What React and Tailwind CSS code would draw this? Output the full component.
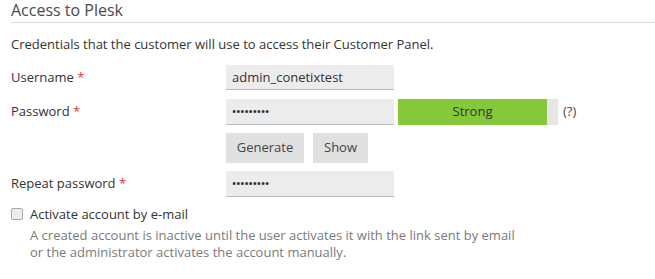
export default function App() {
  const font = { fontFamily: '"Open Sans", "Liberation Sans", sans-serif' };
  return (
    <div className="w-[655px] h-[279px] bg-white text-[13px] text-[#333]" style={font}>
      <div className="pl-[11px]">
        <div className="h-[23px] border-b border-[#dddddd] text-[16px] leading-[20px] text-[#4a4a4a]">
          Access to Plesk
        </div>
        <div className="mt-[12px] leading-[18px] text-[#333]">
          Credentials that the customer will use to access their Customer Panel.
        </div>
        <div className="mt-[12px] flex items-center h-[25px]">
          <div className="w-[215px]">
            Username <span className="text-[#e0342c]">*</span>
          </div>
          <div className="w-[168px] h-[25px] bg-[#ececec] border-b border-[#b5bcc2] pl-[6px] flex items-center leading-none">
            admin_conetixtest
          </div>
        </div>
        <div className="mt-[9px] flex items-center h-[26px]">
          <div className="w-[215px]">
            Password <span className="text-[#e0342c]">*</span>
          </div>
          <div className="w-[168px] h-[26px] bg-[#ececec] border-b border-[#b5bcc2] pl-[6px] flex items-center text-[11px] font-semibold leading-none">
            •••••••••
          </div>
          <div className="ml-[4px] w-[160px] h-[26px] bg-[#e6e6e6] flex">
            <div className="w-[149px] h-full bg-[#85c93a] flex items-center justify-center text-[#333]">
              Strong
            </div>
          </div>
          <div className="ml-[5px] text-[#444]">(?)</div>
        </div>
        <div className="mt-[8px] flex items-center h-[30px]">
          <div className="w-[215px]"></div>
          <div className="w-[78px] h-[30px] bg-[#e0e0e0] text-[#444] flex items-center justify-center">
            Generate
          </div>
          <div className="ml-[9px] w-[55px] h-[30px] bg-[#e0e0e0] text-[#444] flex items-center justify-center">
            Show
          </div>
        </div>
        <div className="mt-[8px] flex items-center h-[26px]">
          <div className="w-[215px]">
            Repeat password <span className="text-[#e0342c]">*</span>
          </div>
          <div className="w-[168px] h-[26px] bg-[#ececec] border-b border-[#b5bcc2] pl-[6px] flex items-center text-[11px] font-semibold leading-none">
            •••••••••
          </div>
        </div>
        <div className="mt-[10px] flex items-center h-[14px]">
          <div className="w-[12px] h-[12px] rounded-[2px] border border-[#a8a8a8] bg-[#ececec]"></div>
          <div className="ml-[7px] leading-none">Activate account by e-mail</div>
        </div>
        <div className="mt-[6px] pl-[19px] leading-[17px] text-[#7a7a7a]">
          <div>A created account is inactive until the user activates it with the link sent by email</div>
          <div>or the administrator activates the account manually.</div>
        </div>
      </div>
    </div>
  );
}
